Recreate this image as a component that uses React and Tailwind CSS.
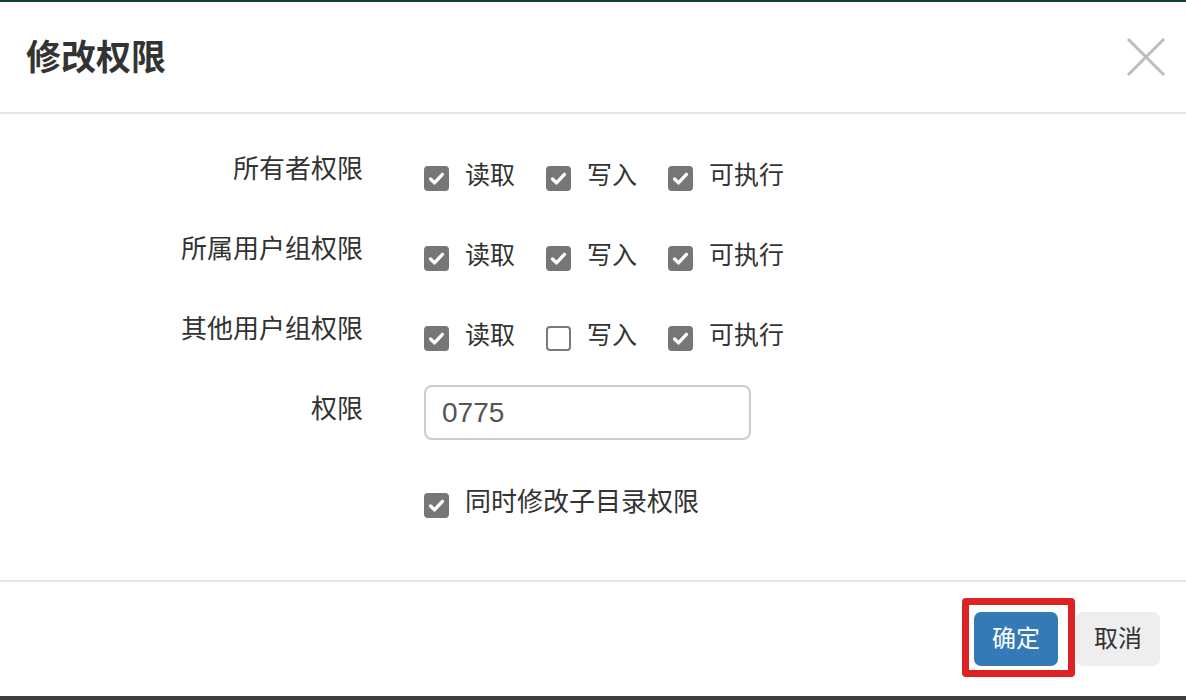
import React, { useState } from "react";

const font = { fontFamily: '"Liberation Sans", "Noto Sans CJK SC", sans-serif' };

const Box = ({ checked, onClick }) => (
  <span
    onClick={onClick}
    className={`w-[25px] h-[25px] rounded-[4px] flex items-center justify-center shrink-0 cursor-pointer ${
      checked ? "bg-[#767676]" : "bg-white border-2 border-[#7a7a7a]"
    }`}
  >
    {checked && (
      <svg width="19" height="19" viewBox="0 0 16 16" fill="none">
        <path d="M3 8.4l3.3 3.3L13 4.5" stroke="#fff" strokeWidth="2.8" strokeLinecap="round" strokeLinejoin="round" />
      </svg>
    )}
  </span>
);

const Option = ({ label, checked, onToggle }) => (
  <label className="flex items-start w-[122px]">
    <span className="mt-[16px]">
      <Box checked={checked} onClick={onToggle} />
    </span>
    <span className="ml-[16px] mt-[6px] text-[25px] leading-[38px] text-[#333]">{label}</span>
  </label>
);

const PermRow = ({ title, value, onChange }) => (
  <div className="flex items-start h-[80px]">
    <div className="w-[363px] text-right text-[26px] leading-[38px] text-[#333]">{title}</div>
    <div className="ml-[61px] flex">
      {["读取", "写入", "可执行"].map((name, i) => (
        <Option key={name} label={name} checked={value[i]} onToggle={() => onChange(i)} />
      ))}
    </div>
  </div>
);

export default function App() {
  const [perms, setPerms] = useState({
    owner: [true, true, true],
    group: [true, true, true],
    other: [true, false, true],
  });
  const [recursive, setRecursive] = useState(true);

  const toggle = (key) => (i) =>
    setPerms((prev) => ({ ...prev, [key]: prev[key].map((v, j) => (j === i ? !v : v)) }));

  return (
    <div className="h-[700px] w-[1186px] flex flex-col bg-white overflow-hidden" style={font}>
      <div className="h-[2px] bg-[#163f30] shrink-0" />

      {/* header */}
      <div className="h-[112px] flex items-center justify-between pl-[26px] pr-[20px] border-b-2 border-[#e5e5e5] shrink-0">
        <h4 className="text-[35px] font-bold text-[#333] leading-none">修改权限</h4>
        <button className="w-[40px] h-[40px] flex items-center justify-center">
          <svg width="40" height="40" viewBox="0 0 40 40">
            <path d="M2 2L38 38M38 2L2 38" stroke="#bdbdbd" strokeWidth="3" />
          </svg>
        </button>
      </div>

      {/* body */}
      <div className="h-[468px] pt-[36px] border-b-2 border-[#e5e5e5] shrink-0">
        <PermRow title="所有者权限" value={perms.owner} onChange={toggle("owner")} />
        <PermRow title="所属用户组权限" value={perms.group} onChange={toggle("group")} />
        <PermRow title="其他用户组权限" value={perms.other} onChange={toggle("other")} />

        <div className="flex items-start mt-[-5px]">
          <div className="w-[363px] mt-[5px] text-right text-[26px] leading-[38px] text-[#333]">权限</div>
          <input
            defaultValue="0775"
            className="ml-[61px] w-[327px] h-[55px] border-2 border-[#cccccc] rounded-[8px] pl-[16px] text-[28px] text-[#555] outline-none"
          />
        </div>

        <div className="flex items-start mt-[43px]">
          <div className="w-[363px]" />
          <div className="ml-[61px] flex items-start">
            <span className="mt-[10px]">
              <Box checked={recursive} onClick={() => setRecursive(!recursive)} />
            </span>
            <span className="ml-[16px] text-[26px] leading-[38px] text-[#333]">同时修改子目录权限</span>
          </div>
        </div>
      </div>

      {/* footer */}
      <div className="flex-1 flex justify-end items-start pt-[30px] pr-[26px]">
        <div className="relative mr-[18px]">
          <button className="w-[84px] h-[54px] rounded-[7px] bg-[#337ab7] text-white text-[24px]">确定</button>
          <div className="absolute left-[-12px] top-[-14px] w-[113px] h-[79px] border-[7px] border-[#dc2222] rounded-[4px] pointer-events-none" />
        </div>
        <button className="w-[84px] h-[54px] rounded-[7px] bg-[#eeeeee] text-[#333] text-[24px]">取消</button>
      </div>

      <div className="h-[4px] bg-[#3e3e3e] shrink-0" />
    </div>
  );
}
